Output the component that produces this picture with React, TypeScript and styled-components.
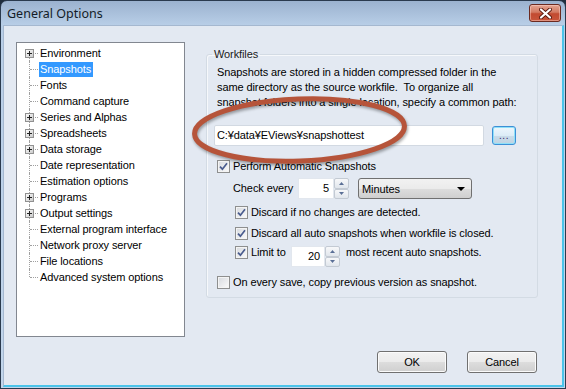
import styled, { createGlobalStyle } from "styled-components";

const UI_FONT = `"Liberation Sans", "Noto Sans CJK JP", sans-serif`;

const GlobalStyle = createGlobalStyle`
  * {
    box-sizing: border-box;
  }
  html,
  body {
    margin: 0;
    padding: 0;
    background: #1f2d3d;
  }
  body {
    font-family: ${UI_FONT};
    font-size: 11px;
    letter-spacing: -0.1px;
    color: #000;
  }
`;

const Window = styled.div`
  position: relative;
  width: 566px;
  height: 389px;
  display: flex;
  flex-direction: column;
  border: 1px solid #2a3a4e;
  border-radius: 7px 7px 0 0;
  background: linear-gradient(to bottom, #9bb2cf, #b8cee7 24px, #c2d6ec);
  padding: 0 1px 1px 2px;
  overflow: hidden;
`;

const TitleBar = styled.div`
  height: 24px;
  flex: none;
  display: flex;
  align-items: center;
  justify-content: space-between;
  padding: 0 3px 0 4px;
`;

const TitleText = styled.span`
  font-family: "Noto Sans", sans-serif;
  font-size: 12.5px;
  letter-spacing: 0;
  color: #141c28;
`;

const CloseButton = styled.div`
  width: 32px;
  height: 18px;
  border: 1px solid #6b2a20;
  border-radius: 3px;
  background: linear-gradient(to bottom, #e4a491, #d37a62 45%, #c24a30 55%, #c8563c);
  box-shadow: inset 0 0 0 1px rgba(255, 220, 210, 0.45);
  display: flex;
  align-items: center;
  justify-content: center;
`;

const Client = styled.div`
  flex: 1;
  display: flex;
  flex-direction: column;
  background: #e3e9f2;
  border-left: 1px solid #a5b8d0;
  border-top: 1px solid #a5b8d0;
  border-right: 2px solid #4bc4ea;
  border-bottom: 2px solid #4bc4ea;
  padding: 16px 24px 0 12px;
`;

const Main = styled.div`
  display: flex;
  gap: 21px;
  height: 295px;
`;

const Tree = styled.div`
  width: 169px;
  height: 295px;
  flex: none;
  background: #fff;
  border: 1px solid #828790;
  padding-top: 2px;
`;

const TreeRow = styled.div`
  height: 16px;
  display: flex;
  align-items: center;
`;

const Connector = styled.span<{ $first: boolean; $last: boolean }>`
  position: relative;
  width: 22px;
  height: 16px;
  flex: none;
  &::before {
    content: "";
    position: absolute;
    left: 12px;
    top: ${(p) => (p.$first ? "8px" : "0")};
    bottom: ${(p) => (p.$last ? "8px" : "0")};
    border-left: 1px dotted #a0a0a0;
  }
  &::after {
    content: "";
    position: absolute;
    left: 13px;
    width: 8px;
    top: 8px;
    border-top: 1px dotted #a0a0a0;
  }
`;

const Expander = styled.svg`
  position: absolute;
  left: 8px;
  top: 4px;
  z-index: 1;
`;

const TreeLabel = styled.span<{ $selected?: boolean }>`
  padding: 0 2px 0 1px;
  line-height: 15px;
  white-space: nowrap;
  background: ${(p) => (p.$selected ? "#3399ff" : "transparent")};
  color: ${(p) => (p.$selected ? "#fff" : "#000")};
`;

const RightColumn = styled.div`
  width: 332px;
  flex: none;
  padding-top: 5px;
`;

const Group = styled.fieldset`
  margin: 0;
  min-width: 0;
  padding: 3px 9px 7px 7px;
  border: 1px solid #d3dbe4;
  border-radius: 3px;
  box-shadow: inset 1px 1px 0 #f6f8fb;
  display: flex;
  flex-direction: column;
`;

const Legend = styled.legend`
  padding: 0 2px;
  margin-left: -2px;
  line-height: 15px;
  color: #1b1b1b;
`;

const Description = styled.p`
  margin: 0;
  padding-left: 3px;
  line-height: 15px;
  white-space: pre;
`;

const PathRow = styled.div`
  display: flex;
  align-items: center;
  gap: 8px;
  margin-top: 15px;
`;

const PathInput = styled.div`
  width: 270px;
  height: 21px;
  background: #fff;
  border: 1px solid #d2d9e2;
  border-radius: 2px;
  padding-left: 2px;
  line-height: 19px;
  white-space: nowrap;
`;

const BrowseButton = styled.div`
  width: 24px;
  height: 19px;
  border: 1px solid #3c8fd6;
  border-radius: 3px;
  background: linear-gradient(to bottom, #eef7fd, #dcecf7 50%, #c9dcea 51%, #bfd3e2);
  box-shadow: inset 0 0 0 1px #8fe0f8;
  display: flex;
  align-items: flex-end;
  justify-content: center;
  padding-bottom: 3px;
  font-size: 10px;
  line-height: 10px;
  color: #3b2466;
  letter-spacing: 0.5px;
`;

const OptionRow = styled.div<{ $indent: number; $top: number; $align?: string }>`
  display: flex;
  align-items: ${(p) => p.$align || "center"};
  gap: 3px;
  padding-left: ${(p) => p.$indent}px;
  margin-top: ${(p) => p.$top}px;
  min-height: 16px;
  white-space: nowrap;
`;

const RowLabel = styled.span<{ $width?: number; $gap?: number }>`
  line-height: 13px;
  width: ${(p) => (p.$width ? `${p.$width}px` : "auto")};
  margin-left: ${(p) => p.$gap || 0}px;
  flex: none;
`;

const CheckBox = styled.span`
  width: 13px;
  height: 13px;
  flex: none;
  border: 1px solid #8e8f8f;
  background: linear-gradient(135deg, #d6d9de, #fbfbfb);
  box-shadow: inset 0 0 0 1px #f4f4f4;
  display: inline-flex;
  align-items: center;
  justify-content: center;
`;

const Spin = styled.div`
  display: flex;
  height: 21px;
  flex: none;
`;

const SpinField = styled.div<{ $width: number }>`
  width: ${(p) => p.$width}px;
  height: 21px;
  background: #fff;
  border: 1px solid #e2e7ee;
  text-align: right;
  padding-right: 4px;
  line-height: 19px;
`;

const SpinArrows = styled.div`
  width: 15px;
  display: flex;
  flex-direction: column;
`;

const SpinButton = styled.div`
  flex: 1;
  border: 1px solid #c3cad3;
  border-radius: 2px;
  background: linear-gradient(to bottom, #f7f8fa, #e1e6ec);
  display: flex;
  align-items: center;
  justify-content: center;
`;

const Dropdown = styled.div`
  width: 114px;
  height: 21px;
  margin-left: 6px;
  border: 1px solid #707070;
  border-radius: 3px;
  background: linear-gradient(to bottom, #f2f2f2, #ebebeb 50%, #dddddd 51%, #cfcfcf);
  display: flex;
  align-items: center;
  justify-content: space-between;
  padding: 0 6px 0 3px;
`;

const Footer = styled.div`
  display: flex;
  justify-content: flex-end;
  gap: 20px;
  margin-top: 14px;
  padding-right: 1px;
`;

const DialogButton = styled.div`
  width: 70px;
  height: 22px;
  border: 1px solid #707070;
  border-radius: 3px;
  background: linear-gradient(to bottom, #f2f2f2, #ebebeb 50%, #dddddd 51%, #cfcfcf);
  box-shadow: inset 0 0 0 1px #fbfbfb;
  display: flex;
  align-items: center;
  justify-content: center;
`;

const Annotation = styled.svg`
  position: absolute;
  left: 179px;
  top: 84px;
  pointer-events: none;
  filter: drop-shadow(1px 2px 1.5px rgba(0, 0, 0, 0.35));
`;

const treeItems = [
  { label: "Environment", expandable: true },
  { label: "Snapshots", selected: true },
  { label: "Fonts" },
  { label: "Command capture" },
  { label: "Series and Alphas", expandable: true },
  { label: "Spreadsheets", expandable: true },
  { label: "Data storage", expandable: true },
  { label: "Date representation" },
  { label: "Estimation options" },
  { label: "Programs", expandable: true },
  { label: "Output settings", expandable: true },
  { label: "External program interface" },
  { label: "Network proxy server" },
  { label: "File locations" },
  { label: "Advanced system options" },
];

function Check({ checked }: { checked?: boolean }) {
  return (
    <CheckBox>
      {checked && (
        <svg width="9" height="9" viewBox="0 0 9 9">
          <path d="M1 4.6 L3.4 7.2 L8 1.2" fill="none" stroke="#4a5c8e" strokeWidth="1.7" />
        </svg>
      )}
    </CheckBox>
  );
}

function SpinBox({ value, width }: { value: string; width: number }) {
  return (
    <Spin>
      <SpinField $width={width}>{value}</SpinField>
      <SpinArrows>
        <SpinButton>
          <svg width="5" height="3" viewBox="0 0 5 3">
            <path d="M0 3 L2.5 0 L5 3 Z" fill="#5a6f96" />
          </svg>
        </SpinButton>
        <SpinButton>
          <svg width="5" height="3" viewBox="0 0 5 3">
            <path d="M0 0 L5 0 L2.5 3 Z" fill="#5a6f96" />
          </svg>
        </SpinButton>
      </SpinArrows>
    </Spin>
  );
}

function App() {
  return (
    <>
      <GlobalStyle />
      <Window>
        <TitleBar>
          <TitleText>General Options</TitleText>
          <CloseButton>
            <svg width="13" height="11" viewBox="0 0 13 11">
              <path
                d="M2 1.5 L11 9.5 M11 1.5 L2 9.5"
                stroke="#5a1a10"
                strokeWidth="4"
                strokeLinecap="round"
              />
              <path
                d="M2 1.5 L11 9.5 M11 1.5 L2 9.5"
                stroke="#ffffff"
                strokeWidth="2.2"
                strokeLinecap="round"
              />
            </svg>
          </CloseButton>
        </TitleBar>
        <Client>
          <Main>
            <Tree>
              {treeItems.map((item, i) => (
                <TreeRow key={item.label}>
                  <Connector $first={i === 0} $last={i === treeItems.length - 1}>
                    {item.expandable && (
                      <Expander width="9" height="9" viewBox="0 0 9 9">
                        <defs>
                          <linearGradient id={`exp${i}`} x1="0" y1="0" x2="1" y2="1">
                            <stop offset="0" stopColor="#ffffff" />
                            <stop offset="1" stopColor="#c8c8c8" />
                          </linearGradient>
                        </defs>
                        <rect x="0.5" y="0.5" width="8" height="8" fill={`url(#exp${i})`} stroke="#919191" />
                        <path d="M2 4.5 H7 M4.5 2 V7" stroke="#222" strokeWidth="1" />
                      </Expander>
                    )}
                  </Connector>
                  <TreeLabel $selected={item.selected}>{item.label}</TreeLabel>
                </TreeRow>
              ))}
            </Tree>
            <RightColumn>
              <Group>
                <Legend>Workfiles</Legend>
                <Description>
                  {"Snapshots are stored in a hidden compressed folder in the\nsame directory as the source workfile.  To organize all\nsnapshot folders into a single location, specify a common path:"}
                </Description>
                <PathRow>
                  <PathInput>C:¥data¥EViews¥snapshottest</PathInput>
                  <BrowseButton>...</BrowseButton>
                </PathRow>
                <OptionRow $indent={3} $top={12}>
                  <Check checked />
                  <RowLabel>Perform Automatic Snapshots</RowLabel>
                </OptionRow>
                <OptionRow $indent={19} $top={4}>
                  <RowLabel $width={62}>Check every</RowLabel>
                  <SpinBox value="5" width={36} />
                  <Dropdown>
                    <span>Minutes</span>
                    <svg width="8" height="4" viewBox="0 0 8 4">
                      <path d="M0 0 L8 0 L4 4 Z" fill="#000" />
                    </svg>
                  </Dropdown>
                </OptionRow>
                <OptionRow $indent={21} $top={5}>
                  <Check checked />
                  <RowLabel>Discard if no changes are detected.</RowLabel>
                </OptionRow>
                <OptionRow $indent={21} $top={5}>
                  <Check checked />
                  <RowLabel>Discard all auto snapshots when workfile is closed.</RowLabel>
                </OptionRow>
                <OptionRow $indent={21} $top={5} $align="flex-start">
                  <Check checked />
                  <RowLabel $width={37}>Limit to</RowLabel>
                  <SpinBox value="20" width={34} />
                  <RowLabel $gap={3}>most recent auto snapshots.</RowLabel>
                </OptionRow>
                <OptionRow $indent={3} $top={7}>
                  <Check />
                  <RowLabel>On every save, copy previous version as snapshot.</RowLabel>
                </OptionRow>
              </Group>
            </RightColumn>
          </Main>
          <Footer>
            <DialogButton>OK</DialogButton>
            <DialogButton>Cancel</DialogButton>
          </Footer>
        </Client>
        <Annotation width="240" height="90" viewBox="0 0 240 90">
          <ellipse
            cx="119.5"
            cy="45"
            rx="105"
            ry="31"
            transform="rotate(-2.2 119.5 45)"
            fill="none"
            stroke="#b6543a"
            strokeWidth="5"
          />
        </Annotation>
      </Window>
    </>
  );
}

export default App;
